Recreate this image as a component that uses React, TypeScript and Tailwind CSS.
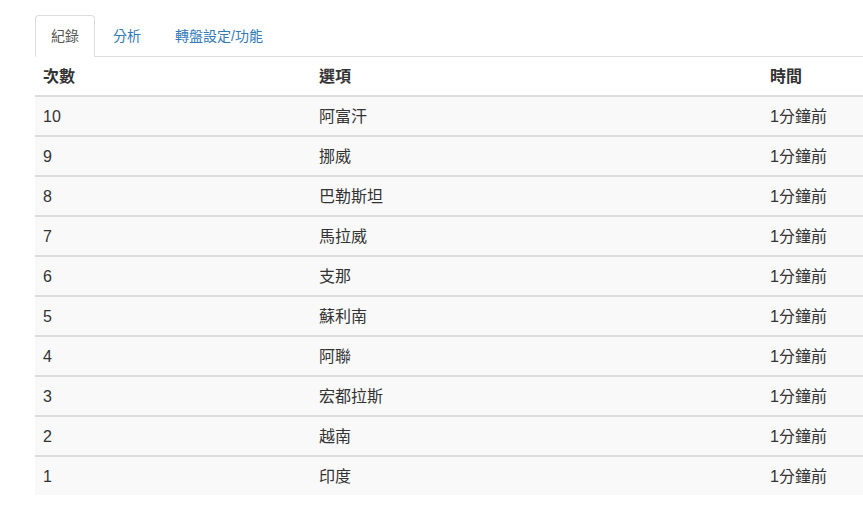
import React from 'react';

const rows = [
  { n: 10, name: '阿富汗' },
  { n: 9, name: '挪威' },
  { n: 8, name: '巴勒斯坦' },
  { n: 7, name: '馬拉威' },
  { n: 6, name: '支那' },
  { n: 5, name: '蘇利南' },
  { n: 4, name: '阿聯' },
  { n: 3, name: '宏都拉斯' },
  { n: 2, name: '越南' },
  { n: 1, name: '印度' },
];

const tabs = ['紀錄', '分析', '轉盤設定/功能'];

const App: React.FC = () => {
  return (
    <div
      className="w-[863px] h-[524px] overflow-hidden bg-white text-[14px] text-[#333]"
      style={{ fontFamily: '"Liberation Sans", "Noto Sans CJK TC", sans-serif' }}
    >
      <div className="pt-[15px] pl-[35px] w-[900px]">
        {/* Tabs */}
        <div className="flex border-b border-[#ddd] h-[42px]">
          {tabs.map((t, i) => (
            <div
              key={t}
              className={
                i === 0
                  ? 'mr-[2px] -mb-px px-[15px] h-[42px] flex items-center leading-[20px] rounded-t-[4px] border border-[#ddd] border-b-white bg-white text-[#555]'
                  : 'mr-[2px] px-[15px] h-[42px] flex items-center leading-[20px] border border-transparent text-[#337ab7]'
              }
            >
              {t}
            </div>
          ))}
        </div>

        {/* Table */}
        <div className="text-[16px]">
          <div className="grid grid-cols-[276px_451px_1fr] h-[40px] pt-[2px] items-center border-b-2 border-[#ddd] font-bold">
            <div className="px-[8px]">次數</div>
            <div className="px-[8px]">選項</div>
            <div className="px-[8px]">時間</div>
          </div>
          {rows.map((r, i) => (
            <div
              key={r.n}
              className={`grid grid-cols-[276px_451px_1fr] items-center pt-px bg-[#f9f9f9] ${
                i === rows.length - 1 ? 'h-[38px]' : 'h-[40px] border-b-2 border-[#ddd]'
              }`}
            >
              <div className="px-[8px]">{r.n}</div>
              <div className="px-[8px]">{r.name}</div>
              <div className="px-[8px]">1分鐘前</div>
            </div>
          ))}
        </div>
      </div>
    </div>
  );
};

export default App;
